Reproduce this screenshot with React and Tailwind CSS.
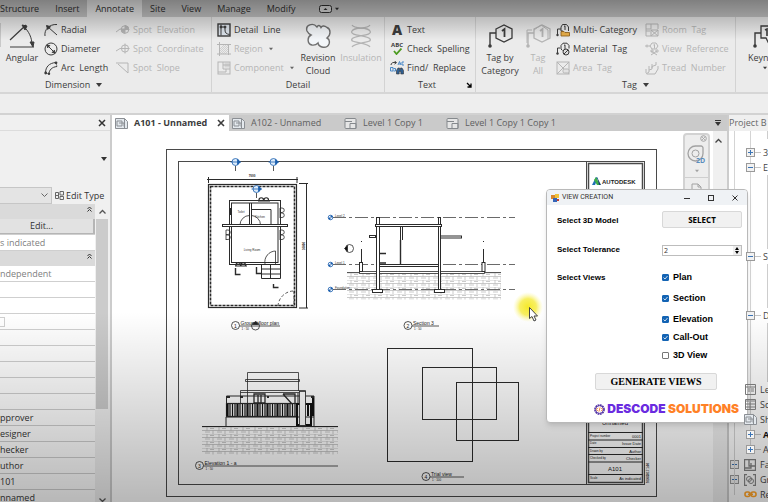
import React, { useState } from "react";

const menuTabs = ["Structure", "Insert", "Annotate", "Site", "View", "Manage", "Modify"];

const Svg = ({ className = "h-[14px] w-[14px]", box = "0 0 14 14", children }) => (
  <svg
    viewBox={box}
    className={`shrink-0 ${className}`}
    fill="none"
    stroke="currentColor"
    aria-hidden="true"
  >
    {children}
  </svg>
);

const RadialIcon = () => (
  <Svg>
    <path d="M1 13C0 7 5 1 13 1.500M4 4l9 8" />
    <path d="M2.500 2.500l4 1.200-2.800 2.800z" fill="currentColor" />
  </Svg>
);

const DiameterIcon = () => (
  <Svg>
    <circle cx="7" cy="7" r="6" />
    <path d="M3.500 3.500l7 7" />
    <path d="M2.800 2.800l3 .8-2.200 2.200zM11.200 11.200l-3-.8 2.200-2.200z" fill="currentColor" />
  </Svg>
);

const ArcIcon = () => (
  <Svg>
    <path d="M1.500 12C1.500 6 5 2 12 1.500M5 13c0-4 3-7 8-7.500" />
    <path d="M1.500 12L5 13M12 1.500l1 4" strokeWidth=".6" />
    <circle cx="1.700" cy="12" r="1.400" fill="currentColor" stroke="none" />
    <circle cx="12" cy="1.800" r="1.400" fill="currentColor" stroke="none" />
    <circle cx="5" cy="12.700" r="1.200" fill="currentColor" stroke="none" />
  </Svg>
);

const SpotElevationIcon = () => (
  <Svg>
    <path d="M0 9l4-3h9" />
    <circle cx="9" cy="6.500" r="3.800" />
    <path d="M9 2.700a3.800 3.800 0 013.800 3.800H9zM9 10.300a3.800 3.800 0 01-3.800-3.800H9z" fill="currentColor" />
  </Svg>
);

const SpotCoordinateIcon = () => (
  <Svg>
    <path d="M0 9l4-2.500h9.500M9 1.500v10" />
    <circle cx="9" cy="6.500" r="3.600" />
  </Svg>
);

const SpotSlopeIcon = () => (
  <Svg>
    <path d="M0 2h12v10L2 3" />
  </Svg>
);

const DetailLineIcon = () => (
  <Svg>
    <rect x="1" y="1" width="12" height="12" fill="#dfe6ee" strokeWidth="1.400" />
    <path d="M4 1.500v11M4 4h4M8 3v4c0 3 1.500 4 4.500 4.500" />
    <circle cx="4" cy="4" r="1" fill="currentColor" />
    <circle cx="8" cy="4" r="1" fill="currentColor" />
  </Svg>
);

const RegionIcon = () => (
  <Svg>
    <path d="M2.500 0v14M0 2.500h14M11.500 2v11M0 12h14" />
    <path d="M3 7l4-4M3 11l8-8M6 12l5-5M3 9l6-6M4 12l7-7M8 12l3-3" strokeWidth=".5" />
  </Svg>
);

const ComponentIcon = () => (
  <Svg>
    <rect x="1" y="1" width="12" height="12" />
    <path d="M6 1v7h7M6 4h7M1 11h8V8" />
    <rect x="8" y="2" width="4" height="4" fill="currentColor" opacity=".4" />
  </Svg>
);

const TextIcon = () => (
  <span className="w-[14px] shrink-0 text-center text-[14px] leading-[14px] font-extrabold">A</span>
);

const SpellIcon = () => (
  <span className="flex w-[14px] shrink-0 flex-col items-center">
    <span className="text-[6px] leading-[6px] font-bold">ABC</span>
    <Svg className="h-[7px] w-[9px] text-[#4b9b1f]" box="0 0 9 7">
      <path d="M1 3l2.500 3L8.500 .500" strokeWidth="1.800" />
    </Svg>
  </span>
);

const FindIcon = () => (
  <Svg>
    <path d="M1 4c0-2 2-3 5-2.500M4.500 0l2 1.600-2 1.500" />
    <path d="M8 4l1.500-3.500L11 4M9 3h1.500M14 1h-2v3h2M.5 6.500v3.500h2.500v-3.500zM3.500 7.500h2v2.500h-2" stroke="#3a7fc4" strokeWidth=".9" />
    <path d="M6.500 13V9.500L8 7h1.500v2h1V7H12l1.500 2.500V13h-2.700v-2.500H9.200V13z" fill="#2e5f93" stroke="#333" strokeWidth=".6" />
  </Svg>
);

const MultiTagIcon = () => (
  <Svg>
    <path d="M1.500 12V6H5" />
    <circle cx="1.500" cy="12" r="1.200" fill="currentColor" stroke="none" />
    <path d="M5 4l1.500-2.500h4L12.500 4v4M5 4v4h2M8 3.500l1-.700V7" />
    <path d="M5 8.500h3l1 1h4.500V13H5z" fill="#eab04a" stroke="#8b5a14" strokeWidth=".8" />
  </Svg>
);

const MaterialTagIcon = () => (
  <Svg>
    <path d="M1.500 11V6H4" />
    <circle cx="1.500" cy="11.500" r="1.200" fill="currentColor" stroke="none" />
    <path d="M5 3.500L7 1.200h4L13 3.500v3M5 3.500V7l1.500 1.500M8 3.500l1-.700V7" />
    <circle cx="10" cy="10" r="3" fill="#ddd" />
    <path d="M8 12l4-4" />
  </Svg>
);

const AreaTagIcon = () => (
  <Svg>
    <rect x="1" y="1" width="12" height="12" />
    <path d="M1 1l12 12M13 1L1 13" />
    <rect x="7" y="8" width="6" height="4" rx="1.500" fill="#e2e2e2" />
  </Svg>
);

const RoomTagIcon = () => (
  <Svg>
    <path d="M13 6V1H1v12h5M1 6h5V1M1 8h4" />
    <path d="M6 7l7 6M13 7l-7 6M6 7h7v6H6z" />
  </Svg>
);

const ViewRefIcon = () => (
  <Svg>
    <path d="M0 4h5M2 2.500v3M5 4l2-3h4l2 3-2 3H7zM8.500 3l1-.5v4" />
    <path d="M6 9l6 4M12 9l-6 4" />
    <circle cx="7" cy="9" r="1.200" />
    <circle cx="12" cy="9" r="1.200" />
  </Svg>
);

const TreadIcon = () => (
  <Svg>
    <path d="M1 13l3-2V9l3-1V5.500l4-1.500V1M2 13h8l3-5V5M4 5v4M7 3v4M1 8v4" />
  </Svg>
);

const DownArrow = ({ className = "w-[6px]" }) => (
  <svg viewBox="0 0 6 4" className={`h-[4px] shrink-0 ${className}`} aria-hidden="true">
    <path d="M0 0h6L3 4z" fill="currentColor" />
  </svg>
);

// small ribbon button, icon on the left
const Tool = ({ icon, label, disabled, menu }) => (
  <button
    type="button"
    disabled={disabled}
    className={`flex h-[19px] items-center gap-[3px] whitespace-pre ${
      disabled ? "text-[#b5b5b5]" : "text-[#3c3c3c]"
    }`}
  >
    {icon}
    {label}
    {menu && <DownArrow className="ml-[3px] w-[4px] text-[#666]" />}
  </button>
);

const BigTool = ({ icon, lines, disabled, className }) => (
  <button
    type="button"
    disabled={disabled}
    className={`flex shrink-0 flex-col items-center leading-[13px] ${className} ${
      disabled ? "text-[#b5b5b5]" : "text-[#3c3c3c]"
    }`}
  >
    <span className="flex h-[31px] items-center">{icon}</span>
    {lines.map((line) => (
      <span key={line}>{line}</span>
    ))}
  </button>
);

const Panel = ({ title, titleClass = "justify-center", menu, launcher, className, children }) => (
  <section className={`relative flex shrink-0 flex-col border-r border-[#d3d3d3] ${className}`}>
    <div className="flex h-[60px] items-start pt-[3px]">{children}</div>
    <h2 className={`flex h-[16px] items-center gap-[6px] text-[#3c3c3c] ${titleClass}`}>
      {title}
      {menu && <DownArrow />}
    </h2>
    {launcher && (
      <Svg className="absolute right-[3px] bottom-[4px] h-[6px] w-[6px]" box="0 0 6 6">
        <path d="M1 1l4 4M5 1.500V5H1.500" strokeWidth="1.300" />
      </Svg>
    )}
  </section>
);

const TagGlyph = ({ double }) => (
  <Svg className="h-[26px] w-[26px]" box="0 0 26 26">
    {double && <path d="M2 20V7h5M9 7l7-5 7 5v9" />}
    <path d="M3 22V10h6" strokeWidth="1.400" />
    <circle cx="3" cy="23" r="1.800" fill="currentColor" stroke="none" />
    <path d="M9 6l8-4 8 4v9l-8 4-8-4z" strokeWidth="1.300" />
    <path d="M15 8l2.500-2v8" strokeWidth="1.800" />
  </Svg>
);

const Ribbon = () => (
  <div className="flex h-[77px] shrink-0 overflow-hidden border-b-2 border-[#d6d6d6] bg-[#ebebeb]">
    <Panel title="Dimension" menu titleClass="pl-[45px]" className="w-[212px]">
      <span className="mt-[3px] h-[24px] w-px bg-[#c9c9c9]" />
      <BigTool
        className="w-[42px]"
        lines={["Angular"]}
        icon={
          <Svg className="h-[26px] w-[26px]" box="0 0 26 26">
            <path d="M1 17L17 2M1 24h24" strokeWidth="1.200" />
            <path d="M14 3c6 5 9 12 9 19" />
            <path d="M13 2l5 1-2 4zM21 19h4l-1 5z" fill="currentColor" />
          </Svg>
        }
      />
      <div className="ml-px w-[72px]">
        <Tool icon={<RadialIcon />} label="Radial" />
        <Tool icon={<DiameterIcon />} label="Diameter" />
        <Tool icon={<ArcIcon />} label="Arc  Length" />
      </div>
      <div>
        <Tool disabled icon={<SpotElevationIcon />} label="Spot  Elevation" />
        <Tool disabled icon={<SpotCoordinateIcon />} label="Spot  Coordinate" />
        <Tool disabled icon={<SpotSlopeIcon />} label="Spot  Slope" />
      </div>
    </Panel>
    <Panel title="Detail" className="w-[173px]">
      <div className="ml-[5px] w-[81px]">
        <Tool icon={<DetailLineIcon />} label="Detail  Line" />
        <Tool disabled menu icon={<RegionIcon />} label="Region" />
        <Tool disabled menu icon={<ComponentIcon />} label="Component" />
      </div>
      <BigTool
        className="w-[40px]"
        lines={["Revision", "Cloud"]}
        icon={
          <Svg className="h-[26px] w-[26px]" box="0 0 26 26">
            <path
              d="M12 4C8-1 0 2 2 8c1 2 2 3 4 4-4 2-4 9 1 10 3 .5 5-1 6-2 1 5 9 6 11 1 1-3 0-5-2-6 4-3 4-9 0-10.500C19 2 17 3 16 4.500 15 2 13 2 12 4z"
              fill="#f3f6f9"
              stroke="#707070"
              strokeWidth="1.400"
            />
          </Svg>
        }
      />
      <BigTool
        disabled
        className="w-[46px]"
        lines={["Insulation"]}
        icon={
          <Svg className="h-[24px] w-[20px]" box="0 0 20 24">
            <path d="M1 1c3 5 15 1 18 6S4 11 1 15s15 3 18 8M19 1C16 6 4 2 1 7s15 4 18 8S4 18 1 23" strokeWidth="1.300" />
          </Svg>
        }
      />
    </Panel>
    <Panel title="Text" launcher titleClass="pl-[33px]" className="w-[91px]">
      <div className="ml-[5px]">
        <Tool icon={<TextIcon />} label="Text" />
        <Tool icon={<SpellIcon />} label="Check  Spelling" />
        <Tool icon={<FindIcon />} label="Find/  Replace" />
      </div>
    </Panel>
    <Panel title="Tag" menu titleClass="pl-[146px]" className="w-[260px]">
      <BigTool className="ml-[3px] w-[42px]" lines={["Tag by", "Category"]} icon={<TagGlyph />} />
      <BigTool disabled className="w-[34px]" lines={["Tag", "All"]} icon={<TagGlyph double />} />
      <div className="ml-px w-[89px]">
        <Tool icon={<MultiTagIcon />} label="Multi- Category" />
        <Tool icon={<MaterialTagIcon />} label="Material  Tag" />
        <Tool disabled icon={<AreaTagIcon />} label="Area  Tag" />
      </div>
      <div>
        <Tool disabled icon={<RoomTagIcon />} label="Room  Tag" />
        <Tool disabled icon={<ViewRefIcon />} label="View  Reference" />
        <Tool disabled icon={<TreadIcon />} label="Tread  Number" />
      </div>
    </Panel>
    <div className="ml-[12px] flex flex-col pt-[3px] text-[#3c3c3c]">
      <span className="flex h-[31px] items-center pl-[4px]">
        <Svg className="h-[26px] w-[26px]" box="0 0 26 26">
          <path d="M3 22V10h6" strokeWidth="1.400" />
          <circle cx="3" cy="23" r="1.800" fill="currentColor" stroke="none" />
          <path d="M9 3h16v12h-6l-3 4-2-4H9z" strokeWidth="1.300" />
          <path d="M13 7l2-1v7" strokeWidth="1.600" />
        </Svg>
      </span>
      <span className="leading-[13px]">Keyn</span>
      <DownArrow className="mt-[2px] ml-[15px] w-[4px]" />
    </div>
  </div>
);

const chevrons = (
  <Svg className="h-[6px] w-[5px] text-[#333]" box="0 0 5 6">
    <path d="M.5 3l2-2 2 2M.5 5.500l2-2 2 2" />
  </Svg>
);

const PropertyRow = ({ children }) => (
  <div className="flex h-[16px] items-center border-b border-[#cfcfcf] bg-white leading-[12px]">{children}</div>
);

const PropertyHeader = () => (
  <div className="flex h-[15px] items-start justify-end bg-[#dadada] pt-[2px] pr-[3px]">{chevrons}</div>
);

const identity = ["pprover", "esigner", "hecker", "uthor", "101", "nnamed"];

const Properties = () => (
  <aside className="flex w-[112px] shrink-0 flex-col border-r-2 border-[#cccccc] bg-[#f0f0f0]">
    <div className="flex h-[16px] shrink-0 items-center justify-end border-b border-[#dcdcdc] pr-[4px]">
      <button type="button" aria-label="Close properties" className="text-[#333]">
        <Svg className="h-[8px] w-[8px]" box="0 0 8 8">
          <path d="M1 1l6 6M7 1L1 7" strokeWidth="1.500" />
        </Svg>
      </button>
    </div>
    <div className="flex h-[56px] shrink-0 items-center justify-end pr-[3px] text-[#333]">
      <DownArrow />
    </div>
    <div className="flex h-[17px] shrink-0 items-center">
      <div className="relative h-full w-[52px]">
        <select aria-label="Type" className="h-full w-full appearance-none border border-l-0 border-[#c6c6c6] bg-[#e4e4e4]" />
        <Svg className="pointer-events-none absolute top-[6px] right-[4px] h-[5px] w-[7px] text-[#666]" box="0 0 7 5">
          <path d="M.5 .5l3 3 3-3" />
        </Svg>
      </div>
      <button type="button" className="ml-[3px] flex items-center gap-[2px] whitespace-nowrap text-[#333]">
        <Svg className="h-[9px] w-[9px] text-[#666]" box="0 0 9 9">
          <path d="M.5 1.500h3v6h-3zM5 .5h3.500v3.500H5zM5 5.500h3.500v3H5zM0 4.500h4" />
        </Svg>
        Edit Type
      </button>
    </div>
    <div className="flex min-h-0 flex-1 overflow-hidden">
      <div className="w-[95px] text-[#333]">
        <PropertyHeader />
        <PropertyRow>
          <button type="button" className="h-[15px] w-full border-r-2 border-b border-[#b5b5b5] bg-[#e2e2e2] pr-[10px] text-[#333]">
            Edit...
          </button>
        </PropertyRow>
        <PropertyRow>
          <span className="text-[#808080]">s indicated</span>
        </PropertyRow>
        <PropertyHeader />
        <PropertyRow>
          <span className="text-[#808080]">ndependent</span>
        </PropertyRow>
        <PropertyRow />
        <PropertyRow />
        <PropertyRow>
          <span className="h-[10px] w-[5px] border border-l-0 border-[#d0d0d0]" />
        </PropertyRow>
        <PropertyRow />
        <PropertyRow />
        <PropertyRow />
        <PropertyRow />
        <PropertyRow />
        {identity.map((value) => (
          <PropertyRow key={value}>{value}</PropertyRow>
        ))}
      </div>
      <div className="ml-px flex w-[12px] flex-col items-center text-[#555]">
        <Svg className="my-[5px] h-[5px] w-[7px]" box="0 0 7 5">
          <path d="M.5 4.500l3-3 3 3" strokeWidth="1.300" />
        </Svg>
        <div className="h-[190px] w-full shrink-0 bg-[#cbcbcb]" />
        <Svg className="mt-auto h-[5px] w-[7px]" box="0 0 7 5">
          <path d="M.5 1.500l3 3 3-3" strokeWidth="1.300" />
        </Svg>
      </div>
    </div>
  </aside>
);

const SheetIcon = () => (
  <Svg className="h-[11px] w-[13px] text-[#8b8f94]" box="0 0 13 11">
    <path d="M.5 .5h9l3 3v7H.5z" fill="#e4e9ee" />
    <path d="M2 3h5v5H2zM4 5h5v3.500M9.500 .5v10" />
  </Svg>
);

const ViewIcon = () => (
  <Svg className="h-[11px] w-[13px] text-[#85898d]" box="0 0 13 11">
    <rect x="1" y=".5" width="11" height="10" rx="1" fill="#e6e6e6" />
    <path d="M1 3.500h7M6 5.500h6v5H6z" />
  </Svg>
);

const DocTab = ({ icon, label, active, className }) => (
  <div
    className={`flex shrink-0 items-center gap-[6px] pl-[3px] whitespace-nowrap ${className} ${
      active ? "bg-white font-bold text-[#3c3c3c]" : "text-[#606060]"
    }`}
  >
    {icon}
    {label}
    {active && (
      <button type="button" aria-label="Close view" className="ml-auto pr-[4px]">
        <Svg className="h-[8px] w-[8px]" box="0 0 8 8">
          <path d="M1 1l6 6M7 1L1 7" strokeWidth="1.600" />
        </Svg>
      </button>
    )}
  </div>
);

const SectionMark = ({ x, y }) => (
  <g>
    <circle cx={x} cy={y} r="3.500" fill="#dcebfa" stroke="#1c5fae" />
    <path d={`M${x - 5} ${y}h10M${x + 2} ${y - 2.5}l3 2.500-3 2.500z`} stroke="#1c5fae" fill="#1c5fae" strokeWidth=".8" />
    <path d={`M${x} ${y + 4}v5`} />
  </g>
);

const LevelMark = ({ y, name }) => (
  <g>
    <circle cx="330.500" cy={y} r="2.300" fill="#fff" stroke="#1c5fae" />
    <path d={`M330.500 ${y}v-2.300a2.300 2.300 0 012.300 2.300zM330.500 ${y}v2.300a2.300 2.300 0 01-2.300-2.300z`} fill="#1c5fae" stroke="none" />
    <path d={`M333 ${y}H515`} stroke="#444" strokeDasharray="13 3 3 3" />
    <text x="335" y={y - 1} fontSize="3" fill="#333" stroke="none">{name}</text>
  </g>
);

const ViewTitle = ({ x, y, n, title, scale, to }) => (
  <g>
    <circle cx={x} cy={y} r="4" />
    <path d={`M${x + 4} ${y + 0.500}H${to}`} />
    <g fill="#222" stroke="none">
      <text x={x} y={y + 2} fontSize="5" textAnchor="middle">{n}</text>
      <text x={x + 5} y={y - 1} fontSize="5">{title}</text>
      <text x={x + 6} y={y + 4} fontSize="3">{scale}</text>
    </g>
  </g>
);

const WindowMark = ({ x, y, vertical }) =>
  vertical ? (
    <path d={`M${x} ${y - 5}h2a2 2 0 010 4.500h-2M${x} ${y}h2a2 2 0 010 4.500h-2M${x} ${y - 5}v10`} />
  ) : (
    <path d={`M${x - 5} ${y}v-1a2 2 0 014.500 0v1M${x} ${y}v-1a2 2 0 014.500 0v1M${x - 6} ${y}h12`} strokeWidth="1.200" />
  );

const fenceBars = Array.from({ length: 28 }, (_, i) => 227.5 + i * 2.5);

const titleRows = [
  { y: 438, name: "Project number", value: "0001" },
  { y: 445, name: "Date", value: "Issue Date" },
  { y: 453, name: "Drawn by", value: "Author" },
  { y: 460, name: "Checked by", value: "Checker" },
  { y: 480, name: "Scale", value: "As indicated" },
];

const Sheet = () => (
  <svg
    width="600"
    height="371"
    viewBox="112 131 600 371"
    className="block max-w-none"
    fill="none"
    stroke="#2b2b2b"
    strokeWidth=".8"
    fontFamily="'Liberation Sans', Arial, sans-serif"
  >
    <defs>
      <pattern id="earth" width="12" height="7" patternUnits="userSpaceOnUse">
        <path d="M0 0h12M0 3.500h12M3 0v3.500M9 3.500V7M6 1.500h4M1 5h5" stroke="#a8a8a8" strokeWidth=".6" />
      </pattern>
      <radialGradient id="glow">
        <stop offset="0" stopColor="#f5e929" />
        <stop offset=".55" stopColor="#f6ec45" stopOpacity=".85" />
        <stop offset="1" stopColor="#fbf7a0" stopOpacity="0" />
      </radialGradient>
    </defs>

    {/* sheet border */}
    <g stroke="#4a4a4a" strokeWidth="1">
      <rect x="166.500" y="149.500" width="490" height="347" />
      <rect x="178.500" y="161.500" width="466" height="323" />
      <path d="M586.500 162v322" />
      <rect x="588.500" y="163.500" width="54" height="319" strokeWidth="1.500" />
    </g>

    {/* ground floor plan */}
    <rect x="208.500" y="184.500" width="88" height="123" strokeWidth="1.200" />
    <rect x="210.500" y="186.500" width="84" height="119" strokeWidth="1.600" strokeDasharray="3 1" />
    <path d="M207 179.500h91M208.500 177v6M297 177v6M306.500 183v125M299 183.500h9M299 308h9" strokeWidth="1" />
    <text x="252" y="177" fontSize="3" fontWeight="bold" textAnchor="middle" fill="#111" stroke="none">7000</text>
    <text x="305" y="246" fontSize="3" fontWeight="bold" textAnchor="middle" fill="#111" stroke="none" transform="rotate(-90 305 246)">10000</text>
    <rect x="229.500" y="200.500" width="51" height="64" strokeWidth="1" />
    <rect x="231.500" y="203" width="46.500" height="59.500" strokeWidth="1" />
    <rect x="222.500" y="224.500" width="65" height="2" fill="#fff" strokeWidth="1" />
    <path d="M249.500 203v22M251.500 203v22M252 209.500h19V225" strokeWidth="1" />
    <path d="M240 225a9.500 9.500 0 019.500-9.500M251.500 215.500a9.500 9.500 0 019 9.500M275.500 264v-13M275.500 251a11 11 0 00-10.500 13" />
    <path d="M261.500 264.500h19v14h-19zM261.500 269h19M261.500 274h19M270.500 265v14" strokeWidth="1" />
    <WindowMark x={264} y={201} />
    <WindowMark x={241} y={266} />
    <WindowMark x={280} y={213} vertical />
    <WindowMark x={280} y={235} vertical />
    <WindowMark x={226} y={235} vertical />
    <path d="M230 208v7" strokeWidth="2" />
    <path d="M235.500 268v6.500h5M256.500 267v6.500h5M273.500 284v3.500h5" strokeWidth="1.400" />
    <path d="M278 306a16 16 0 0116-15M294 291v16" strokeDasharray="3 2" />
    <g fill="#333" stroke="none" fontSize="3" textAnchor="middle">
      <text x="241" y="213">Toilet</text>
      <text x="260" y="218">Kitchen</text>
      <text x="252" y="251">Living Room</text>
    </g>
    <SectionMark x={235.5} y={162} />
    <SectionMark x={273.5} y={162} />
    <SectionMark x={256.5} y={189} />
    <ViewTitle x={235.5} y={325.5} n="1" title="Ground floor plan" scale="1 : 50" to={280} />
    <circle cx="255.500" cy="326" r="4" />
    <path d="M252.500 324.500l3-3 3 3z" fill="#222" />

    {/* section */}
    <rect x="347" y="272.500" width="154" height="27" fill="url(#earth)" stroke="none" />
    <path d="M347 272.500h154" />
    <LevelMark y={217.5} name="Level 2" />
    <LevelMark y={264.5} name="Level 1" />
    <LevelMark y={289.5} name="Foundation" />
    <rect x="359.500" y="271.500" width="125" height="2" fill="#fff" />
    <g fill="#fff" strokeWidth="1">
      <rect x="376.500" y="217.500" width="3" height="72" />
      <rect x="438.500" y="217.500" width="2" height="72" />
      <rect x="375.500" y="224.500" width="66" height="2" />
      <rect x="369.500" y="235.500" width="6" height="2" />
      <rect x="440.500" y="236" width="21" height="2" />
      <rect x="372.500" y="289.500" width="10" height="3" />
      <rect x="434.500" y="289.500" width="10" height="3" />
      <rect x="379.500" y="264.500" width="59" height="2" />
      <rect x="359.500" y="262.500" width="3" height="9" />
      <rect x="482" y="262.500" width="3" height="9" />
    </g>
    <path d="M400.500 227v13M402.500 227v13M361.500 249v13M483.500 249v13M361.500 241v1M483.500 241v1" strokeWidth="1" />
    <path d="M400.500 240v25M379 253.500h7M379 263h7" strokeWidth="1.400" />
    <circle cx="349.500" cy="248.500" r="4" />
    <path d="M347.500 245.500l-3 3 3 3z" fill="#111" />
    <ViewTitle x={408} y={325.5} n="2" title="Section 3" scale="1 : 50" to={439} />

    {/* elevation */}
    <rect x="202" y="426.500" width="136" height="28" fill="url(#earth)" stroke="none" />
    <path d="M202 426.500h136" strokeWidth="1.200" />
    <path d="M247.500 403v-30.500h51V391M245.500 379.500h54v2h-54zM240.500 403v-12.500h65V426M240.500 392.500h65" />
    <path d="M226.500 396h87.500v30.500M226.500 396v8M226 417h88M226 417v9M298 403v-10" strokeWidth="1" />
    <rect x="226.500" y="403.500" width="71" height="13" strokeWidth="1.200" />
    {fenceBars.map((x, i) => (
      <path key={x} d={`M${x} 404v12`} strokeWidth={i % 4 === 0 ? 2.2 : 1.2} stroke="#111" />
    ))}
    <path d="M297 404h14v21h-14zM308 404v12M313 397v19" strokeWidth="2" stroke="#111" />
    <rect x="299.500" y="391.500" width="6" height="34" fill="#fff" />
    <path d="M254 394h11v9h-11zM258 395v8M261 395v8M283 394h12v9M283 394l9 10" strokeWidth="1.300" />
    <path d="M227 397h3M240 397h3M311 397h3M267 397h2" strokeWidth="2" />
    <ViewTitle x={199.5} y={465.5} n="3" title="Elevation 1 - a" scale="1 : 50" to={338} />

    {/* trial view */}
    <g strokeWidth="1">
      <rect x="387.500" y="348.500" width="85" height="113" />
      <rect x="422.500" y="367.500" width="74" height="52" />
      <rect x="456.500" y="382.500" width="62" height="58" />
    </g>
    <ViewTitle x={426} y={476.5} n="4" title="Trial view" scale="1 : 100" to={464} />

    {/* title block */}
    <path d="M592 185l4-8 2 1-3 7z" fill="#1f6fb5" stroke="none" />
    <path d="M596 177l4 8h-3l-3-5z" fill="#3fae49" stroke="none" />
    <path d="M597 177l4 8h-2z" fill="#153f6b" stroke="none" />
    <text x="602" y="184" fontSize="6" fontWeight="bold" fill="#222" stroke="none">AUTODESK</text>
    <g fill="#222" stroke="none">
      <text x="615" y="425" fontSize="6" textAnchor="middle">Unnamed</text>
      <text x="615" y="470.500" fontSize="6" textAnchor="middle">A101</text>
      {titleRows.map(({ y, name, value }) => (
        <g key={name}>
          <text x="590" y={y - 1} fontSize="3">{name}</text>
          <text x="641" y={y} fontSize="4">
            <tspan textAnchor="end">{value}</tspan>
          </text>
        </g>
      ))}
      <text x="648.500" y="483" fontSize="3" fontWeight="bold" transform="rotate(-90 648.500 483)">9/16/2017 1:00</text>
    </g>
    <path d="M588 432.500h55M588 440h55M588 447.500h55M588 454.500h55M588 462h55M588 474.500h55" strokeWidth="1" />

    {/* pointer */}
    <circle cx="528" cy="307" r="15" fill="url(#glow)" stroke="none" />
    <path d="M529.500 307.500v11l2.500-2 2 4.500 2-1-2-4h3.500z" fill="#fff" stroke="#444" strokeWidth="1" />
  </svg>
);

const NavBar = () => (
  <div className="absolute top-[2px] right-[17px] flex h-[80px] w-[27px] flex-col items-center rounded-[4px] border-2 border-[#d2d2d2] bg-[#ededed] text-[#a2a2a2]">
    <Svg className="mr-px h-[7px] w-[7px] self-end" box="0 0 7 7">
      <circle cx="3.500" cy="3.500" r="2.800" />
      <path d="M2 2l3 3M5 2L2 5" strokeWidth=".8" />
    </Svg>
    <Svg className="mt-[3px] h-[19px] w-[19px]" box="0 0 19 19">
      <path d="M8.500 1a7.500 7.500 0 107.500 7.500V3a2 2 0 00-2-2z" strokeWidth="1.300" />
      <circle cx="8.500" cy="8.500" r="3.500" />
      <text x="9" y="18" fontSize="7" fontWeight="bold" fill="#5a8dbd" stroke="none">2D</text>
    </Svg>
    <DownArrow className="mt-[5px] w-[4px]" />
    <div className="mt-[4px] h-px w-full bg-[#cfcfcf]" />
    <Svg className="mt-[5px] h-[12px] w-[11px]" box="0 0 11 12">
      <path d="M1 12V1h6l3 3v8M7 1v3h3" />
    </Svg>
  </div>
);

const NodeBox = ({ open }) => (
  <svg viewBox="0 0 9 9" className="z-10 h-[9px] w-[9px] shrink-0" aria-hidden="true">
    <rect x=".5" y=".5" width="8" height="8" fill="#f2f2f2" stroke="#9a9a9a" />
    <path d={open ? "M2 4.500h5" : "M2 4.500h5M4.500 2v5"} stroke="#3b74b5" />
  </svg>
);

const TreeRow = ({ open, label, bold }) => (
  <div className={`flex h-[15px] shrink-0 items-center pl-[17px] ${bold ? "font-bold text-[#111]" : ""}`}>
    <NodeBox open={open} />
    <span className="mr-[2px] h-px w-[6px] shrink-0 bg-[#c4c4c4]" />
    {label}
  </div>
);

const Branch = ({ className }) => (
  <div className={`ml-[38px] shrink-0 border-l border-[#cdcdcd] ${className}`} />
);

const IconRow = ({ box, icon, label }) => (
  <div className="flex h-[15px] shrink-0 items-center">
    <span className="w-[14px] shrink-0 pl-px">{box && <NodeBox />}</span>
    <span className="z-10 mr-[3px] flex w-[14px] shrink-0 justify-center">{icon}</span>
    {label}
  </div>
);

const ProjectBrowser = () => (
  <aside className="flex w-[41px] shrink-0 flex-col overflow-hidden border-l-2 border-[#cccccc] bg-white whitespace-nowrap text-[#444]">
    <h2 className="h-[16px] shrink-0 bg-[#efefef] leading-[16px] text-[#666]">Project B</h2>
    <div className="relative flex flex-1 flex-col">
      <div className="absolute top-0 left-[5px] h-[364px] w-px bg-[#d4d4d4]" />
      <div className="absolute top-0 left-[21px] h-[320px] w-px bg-[#d4d4d4]" />
      <Branch className="h-[8px] border-b" />
      <div className="h-[6px] shrink-0" />
      <TreeRow label="3" />
      <TreeRow open label="E" />
      <Branch className="h-[74px]" />
      <TreeRow open label="S" />
      <Branch className="h-[44px]" />
      <TreeRow open label="D" />
      <Branch className="h-[59px]" />
      <IconRow
        label="Le"
        icon={
          <Svg className="h-[11px] w-[11px] text-[#777]" box="0 0 11 11">
            <path d="M.5 .5h10v10H.5zM.5 3h10M3 5h2M3 7h2M6 5h3M6 7h3" />
          </Svg>
        }
      />
      <IconRow
        label="Sc"
        icon={
          <Svg className="h-[11px] w-[11px] text-[#777]" box="0 0 11 11">
            <path d="M.5 .5h10v10H.5zM.5 2h10M.5 5h10M.5 8h10M5 3v8" />
          </Svg>
        }
      />
      <IconRow label="Sh" icon={<SheetIcon />} />
      <TreeRow bold label="A" />
      <TreeRow label="A" />
      <IconRow
        box
        label="Fa"
        icon={
          <Svg className="h-[12px] w-[12px] text-[#666]" box="0 0 12 12">
            <path d="M.5 .5h11v11H.5zM5 .5V7h6M1 9h6V4" strokeWidth="1.300" />
          </Svg>
        }
      />
      <IconRow
        box
        label="Gr"
        icon={
          <Svg className="h-[12px] w-[12px] text-[#666]" box="0 0 12 12">
            <path d="M3 .5H.5v11H3M9 .5h2.500v11H9" strokeWidth="1.300" />
            <circle cx="5" cy="5" r="2.500" />
            <circle cx="7" cy="7" r="2.500" />
          </Svg>
        }
      />
      <IconRow
        label="Re"
        icon={
          <Svg className="h-[7px] w-[13px] text-[#c07a1c]" box="0 0 13 7">
            <rect x="1" y="1" width="5" height="4.500" rx="2" strokeWidth="1.600" />
            <rect x="7" y="1" width="5" height="4.500" rx="2" strokeWidth="1.600" />
            <path d="M4 3.300h5" strokeWidth="1.500" />
          </Svg>
        }
      />
    </div>
  </aside>
);

const CheckItem = ({ label, defaultChecked }) => (
  <label className="relative flex h-[11px] items-center gap-[4px] text-[9px]">
    <input
      type="checkbox"
      defaultChecked={defaultChecked}
      className="peer h-[7px] w-[7px] appearance-none rounded-[1px] border border-[#777] bg-white checked:border-[#1464b4] checked:bg-[#1464b4]"
    />
    <Svg className="absolute left-px h-[5px] w-[5px] text-white opacity-0 peer-checked:opacity-100" box="0 0 5 5">
      <path d="M.5 2.500L2 4l2.500-3" strokeWidth=".8" />
    </Svg>
    {label}
  </label>
);

const ViewCreation = () => {
  const [tolerance, setTolerance] = useState(2);

  return (
    <div
      role="dialog"
      aria-label="View creation"
      className="absolute top-[189px] right-[20px] flex w-[202px] flex-col overflow-hidden rounded-[4px] border border-[#b9b9b9] bg-white pb-[6px] font-['Liberation_Sans',Arial,sans-serif] text-[8px] text-black shadow-md"
    >
      <div className="flex h-[15px] items-center bg-[#eff2f5] pl-[4px] font-['Roboto',sans-serif] text-[7px] text-[#333]">
        <Svg className="h-[8px] w-[8px]" box="0 0 8 8">
          <path d="M0 1h4v4H0z" fill="#d8862b" stroke="none" />
          <path d="M4 0h4v4H4z" fill="#f0c23b" stroke="none" />
          <path d="M2 4h4v4H2z" fill="#3565b8" stroke="none" />
          <path d="M6 5h2v2H6z" fill="#c43c2e" stroke="none" />
        </Svg>
        <span className="ml-[3px]">VIEW CREATION</span>
        <div className="ml-auto flex items-center gap-[18px] pr-[9px]">
          <button type="button" aria-label="Minimize">
            <Svg className="h-[6px] w-[6px]" box="0 0 6 6"><path d="M0 3.500h6" /></Svg>
          </button>
          <button type="button" aria-label="Maximize">
            <Svg className="h-[6px] w-[6px]" box="0 0 6 6"><rect x=".5" y=".5" width="5" height="5" /></Svg>
          </button>
          <button type="button" aria-label="Close">
            <Svg className="h-[6px] w-[6px]" box="0 0 6 6"><path d="M.5 .5l5 5M5.500 .5l-5 5" /></Svg>
          </button>
        </div>
      </div>

      <div className="grid grid-cols-[105px_minmax(0,1fr)] pr-[5px] pl-[10px] font-bold">
        <span className="mt-[8px] flex h-[16px] items-center">Select 3D Model</span>
        <button
          type="button"
          className="mt-[6px] h-[17px] rounded-[2px] border border-[#d8d8d8] bg-[#f1f1f1] font-['Open_Sans',sans-serif]"
        >
          SELECT
        </button>

        <label htmlFor="tolerance" className="mt-[15px] flex h-[12px] items-center">
          Select Tolerance
        </label>
        <div className="mt-[16px] flex h-[11px] border border-[#bdbdbd]">
          <input
            id="tolerance"
            type="text"
            inputMode="numeric"
            value={tolerance}
            onChange={(e) => setTolerance(Number(e.target.value) || 0)}
            className="min-w-0 flex-1 px-px font-['Open_Sans',sans-serif] text-[7px] leading-[9px] font-normal text-[#333] outline-none"
          />
          <div className="flex w-[8px] shrink-0 flex-col items-center justify-center gap-px bg-[#eeeeee]">
            <button type="button" aria-label="Increase" onClick={() => setTolerance(tolerance + 1)}>
              <svg viewBox="0 0 4 3" className="h-[3px] w-[4px]"><path d="M0 3h4L2 0z" /></svg>
            </button>
            <button type="button" aria-label="Decrease" onClick={() => setTolerance(tolerance - 1)}>
              <svg viewBox="0 0 4 3" className="h-[3px] w-[4px]"><path d="M0 0h4L2 3z" /></svg>
            </button>
          </div>
        </div>

        <span className="mt-[16px] flex h-[11px] items-center">Select Views</span>
        <div className="mt-[16px]">
          <div className="flex flex-col gap-[10px]">
            <CheckItem label="Plan" defaultChecked />
            <CheckItem label="Section" defaultChecked />
            <CheckItem label="Elevation" defaultChecked />
          </div>
          <div className="mt-[7px] flex flex-col gap-[7px]">
            <CheckItem label="Call-Out" defaultChecked />
            <CheckItem label="3D View" />
          </div>
        </div>
      </div>

      <button
        type="button"
        className="mt-[12px] ml-[48px] h-[17px] w-[122px] rounded-[2px] border border-[#d8d8d8] bg-[#f1f1f1] font-['Liberation_Serif',serif] text-[10px] leading-[15px] font-bold"
      >
        GENERATE VIEWS
      </button>
      <div className="mt-[12px] flex h-[14px] items-center justify-end gap-[2px] pr-[8px] font-['Inter',sans-serif] text-[12px] font-black whitespace-nowrap">
        <Svg className="h-[11px] w-[11px]" box="0 0 11 11">
          <circle cx="5.500" cy="5.500" r="4.600" stroke="#4b2aa0" strokeWidth="1.500" strokeDasharray="1.800 .6" />
          <circle cx="5.500" cy="5.500" r="3.800" stroke="#4b2aa0" strokeWidth=".8" />
          <path d="M4 3.800L2.500 5.500 4 7.200M7 3.800l1.500 1.700L7 7.200M6 3.500l-1 4" stroke="#f5832a" strokeWidth=".9" />
        </Svg>
        <span className="text-[#6a2be0]">
          DESCODE <span className="text-[#ff8126]">SOLUTIONS</span>
        </span>
      </div>
    </div>
  );
};

export default function App() {
  return (
    <div className="relative flex h-screen flex-col overflow-hidden bg-[#eeeeee] font-['Open_Sans','Noto_Sans',sans-serif] text-[9px]">
      <nav className="flex h-[17px] shrink-0 items-stretch bg-[#c4c4c4] text-[#2f2f2f]">
        {menuTabs.map((tab, i) => (
          <button
            type="button"
            key={tab}
            className={`${i === 0 ? "pr-[8px]" : "px-[8px]"} ${tab === "Annotate" ? "bg-[#ebebeb]" : ""}`}
          >
            {tab}
          </button>
        ))}
        <button type="button" aria-label="Ribbon display" className="ml-[15px] flex items-center gap-[3px]">
          <Svg className="h-[8px] w-[13px]" box="0 0 13 8">
            <rect x=".5" y=".5" width="12" height="7" rx="2" fill="#ddd" />
            <path d="M4.500 5h4l-2-2z" fill="currentColor" stroke="none" />
          </Svg>
          <DownArrow className="w-[4px]" />
        </button>
      </nav>
      <Ribbon />
      <div className="h-[21px] shrink-0 border-b-2 border-[#d2d2d2] bg-[#eeeeee]" />
      <div className="flex min-h-0 flex-1">
        <Properties />
        <main className="flex min-w-0 flex-1 flex-col bg-white">
          <div className="flex h-[16px] shrink-0 bg-[#cacaca]">
            <DocTab active icon={<SheetIcon />} label="A101 - Unnamed" className="w-[117px]" />
            <DocTab icon={<SheetIcon />} label="A102 - Unnamed" className="w-[112px]" />
            <DocTab icon={<ViewIcon />} label="Level 1 Copy 1" className="w-[102px]" />
            <DocTab icon={<ViewIcon />} label="Level 1 Copy 1 Copy 1" className="w-[120px]" />
            <div className="ml-auto flex flex-col items-center justify-center gap-px pr-[6px] text-[#333]">
              <div className="h-px w-[6px] bg-current" />
              <DownArrow />
            </div>
          </div>
          <div className="relative min-h-0 flex-1 overflow-hidden">
            <Sheet />
            <NavBar />
            <div className="absolute top-0 right-0 flex h-full w-[14px] justify-center bg-[#f0f0f0] pt-[7px] text-[#444]">
              <Svg className="mr-[4px] h-[5px] w-[7px]" box="0 0 7 5">
                <path d="M.5 4.500l3-3 3 3" strokeWidth="1.300" />
              </Svg>
            </div>
          </div>
        </main>
        <ProjectBrowser />
      </div>
      <div className="pointer-events-none absolute inset-x-0 top-0 h-[40px] bg-linear-to-b from-black/35 to-transparent" />
      <div className="pointer-events-none absolute inset-x-0 bottom-0 h-[190px] bg-linear-to-b from-transparent to-black/28" />
      <ViewCreation />
    </div>
  );
}
